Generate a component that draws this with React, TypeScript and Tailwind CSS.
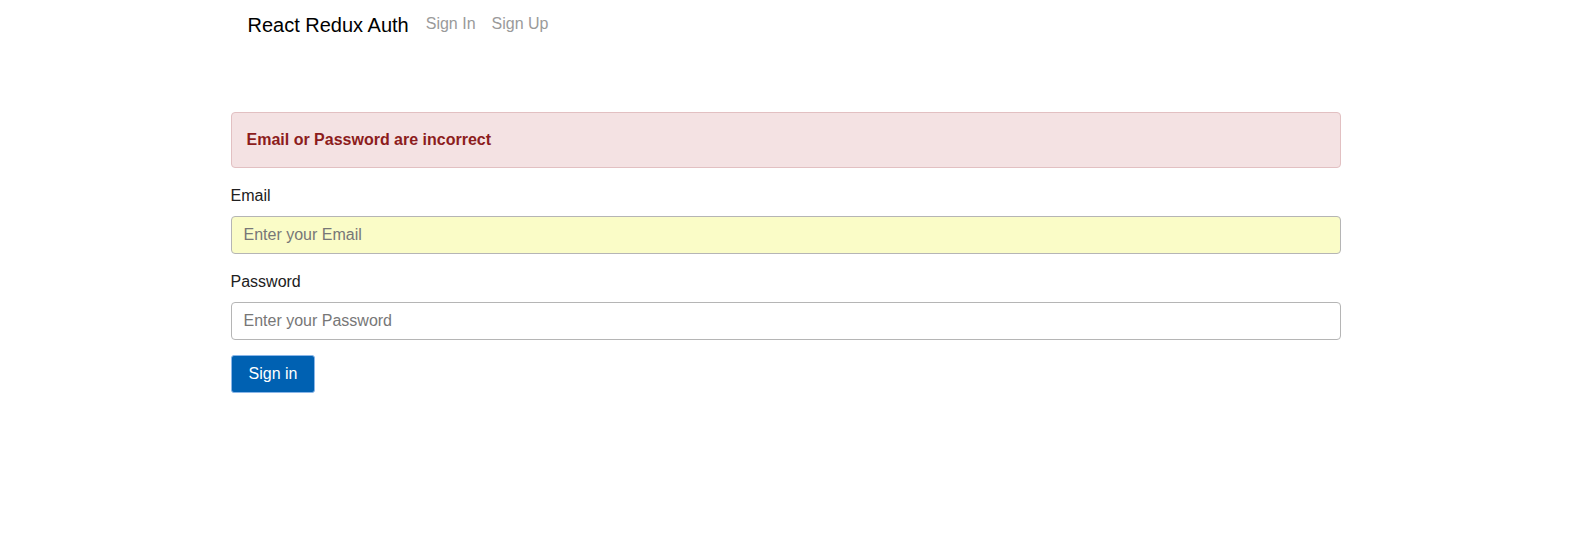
import React from "react";

export default function App() {
  return (
    <div className="min-h-[535px] bg-white text-[#212529]" style={{ fontFamily: '"Liberation Sans", Arial, sans-serif' }}>
      <div className="mx-auto w-[1140px] px-[15px]">
        <nav className="flex items-start pl-[17px] pr-4 pt-[10px]">
          <span className="text-[20px] leading-[30px] text-black mr-[17px]">React Redux Auth</span>
          <span className="pt-[2px] text-[16px] leading-[24px] text-[#9a9a9a]">Sign In</span>
          <span className="pt-[2px] text-[16px] leading-[24px] text-[#9a9a9a] ml-4">Sign Up</span>
        </nav>
        <div className="mt-[72px]">
          <div className="mb-4 rounded-[4px] border border-[#e2c0c2] bg-[#f4e2e3] p-[15px] text-[16px] font-bold leading-[24px] text-[#8c1c1c]">
            Email or Password are incorrect
          </div>
          <form onSubmit={(e) => e.preventDefault()}>
            <div className="mb-4">
              <label className="mb-2 block text-[16px] leading-[24px] text-[#212121]">Email</label>
              <input
                type="email"
                placeholder="Enter your Email"
                className="block h-[38px] w-full rounded-[4px] border border-[#b5b5b5] bg-[#fafcc7] px-3 text-[16px] leading-[24px] placeholder:text-[#777] outline-none"
              />
            </div>
            <div className="mb-4">
              <label className="mb-2 block text-[16px] leading-[24px] text-[#212121]">Password</label>
              <input
                type="password"
                placeholder="Enter your Password"
                className="block h-[38px] w-full rounded-[4px] border border-[#b5b5b5] bg-white px-3 text-[16px] leading-[24px] placeholder:text-[#777] outline-none"
              />
            </div>
            <button
              type="submit"
              className="-mt-px h-[38px] rounded-[3px] border border-[#8ab6e8] bg-[#0061b2] px-[17px] text-[16px] leading-[24px] text-white"
            >
              Sign in
            </button>
          </form>
        </div>
      </div>
    </div>
  );
}
